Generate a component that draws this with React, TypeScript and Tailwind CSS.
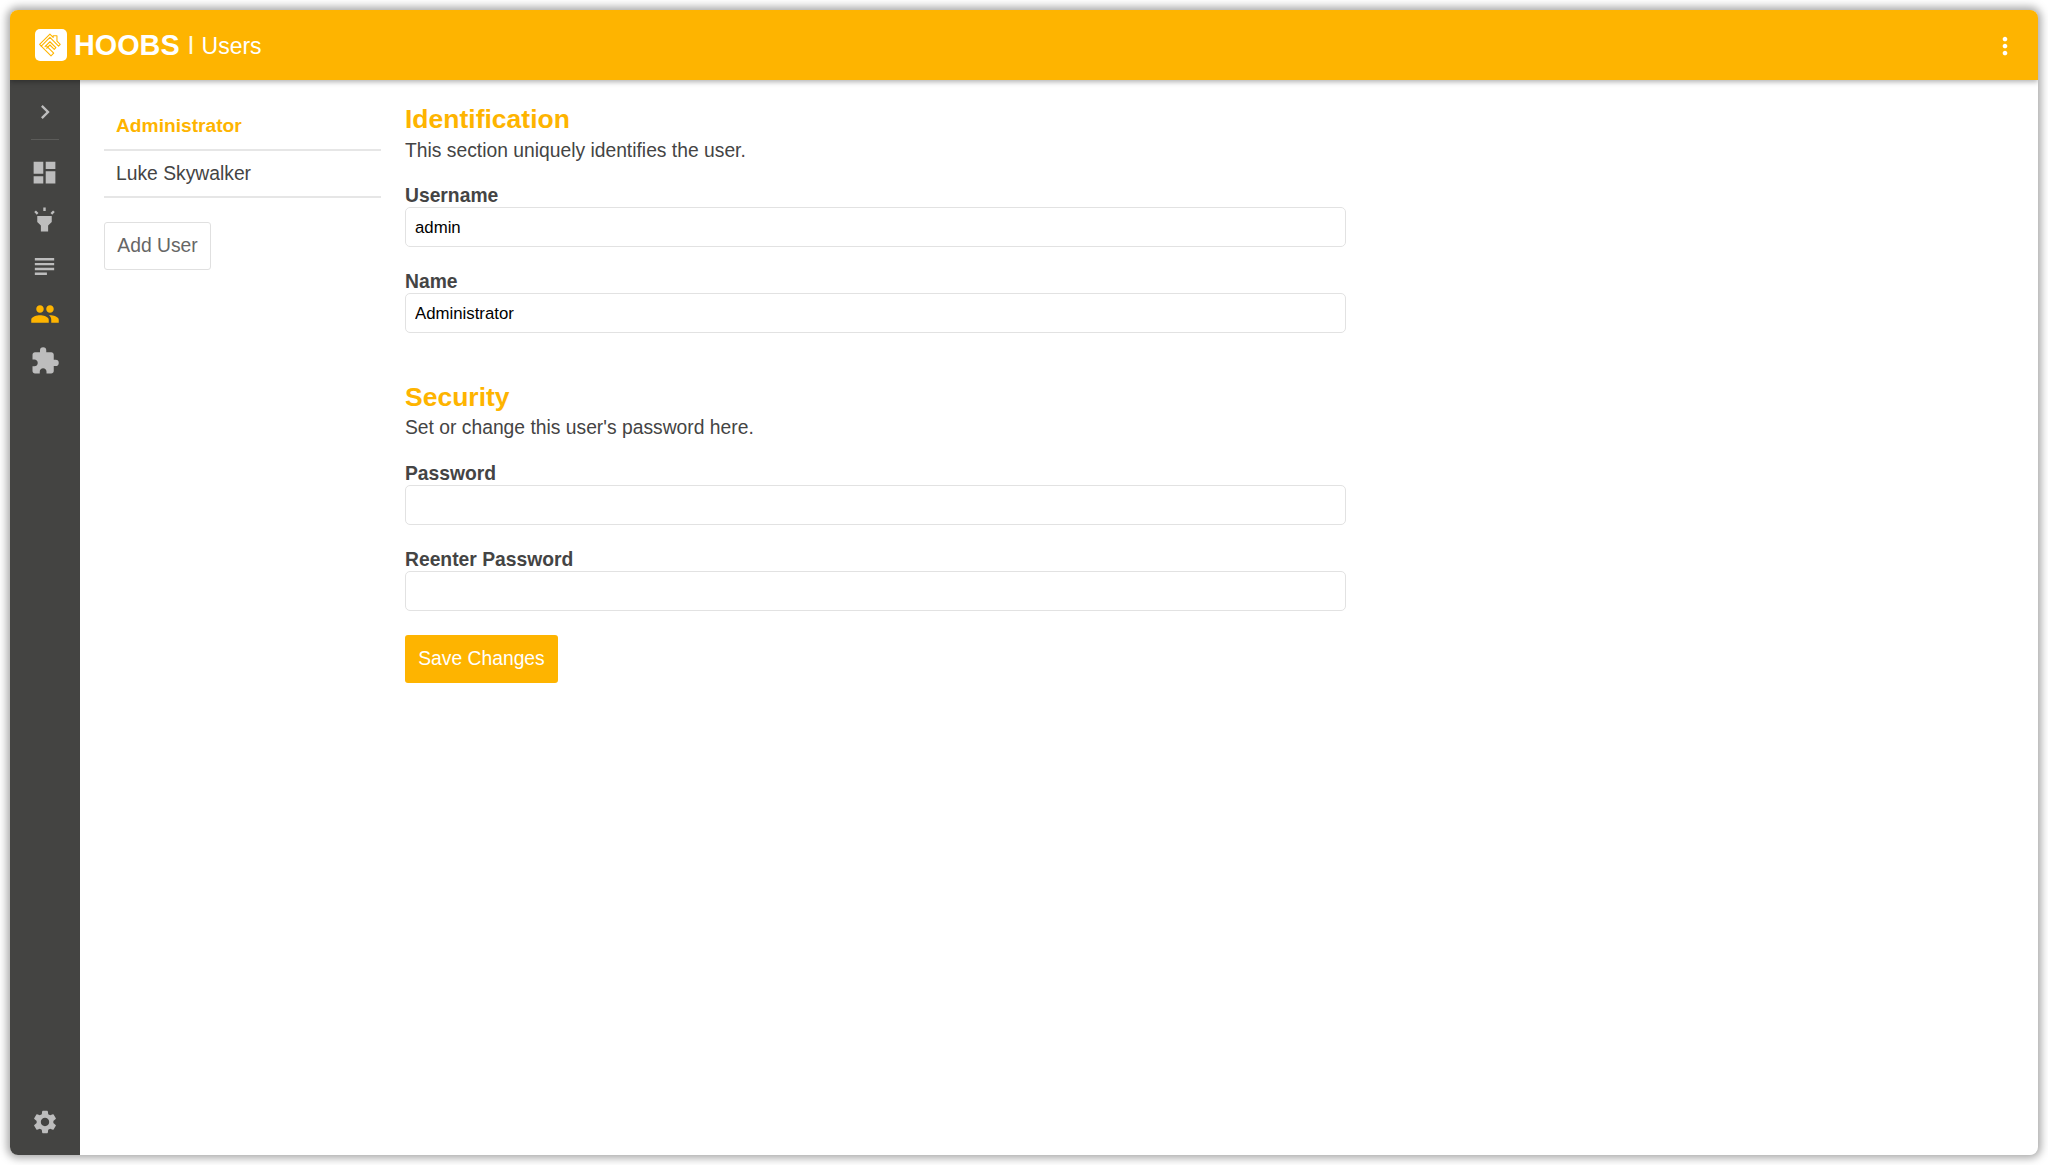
import { MdChevronRight, MdDashboard, MdExtension, MdHighlight, MdMoreVert, MdPeople, MdSettings, MdSubject } from 'react-icons/md'

function Logo() {
  return (
    <div className="flex h-8 w-8 items-center justify-center rounded-[5px] bg-white">
      <svg viewBox="0 0 24 24" className="h-[26px] w-[26px]" fill="none" stroke="#feb400" strokeWidth="1" strokeLinecap="round" strokeLinejoin="round">
        <path d="M1.5 11.5 11 2l3 3V3.5h3.5V8.5l3 3-1.5 1.5L11 5 3 13Z" />
        <path d="M6.5 13.5 11 9l5.5 5.5-1.5 1.5-4-4-3 3" />
        <path d="M3 13l9 9 2.5-2.5-7-7" />
      </svg>
    </div>
  )
}

function Field({ label, value, className }: { label: string; value?: string; className?: string }) {
  return (
    <div className={className}>
      <label className="block pb-[2px] text-[19.3px] leading-[19px] font-bold text-[#444]">{label}</label>
      <input
        readOnly
        value={value ?? ''}
        className="block h-10 w-[941px] rounded-[5px] border border-[#e2e2e2] bg-white px-[9px] pt-[2px] text-[16.8px] text-black outline-none"
      />
    </div>
  )
}

function NavIcon({ children, active }: { children: React.ReactNode; active?: boolean }) {
  return (
    <div className={`flex h-[47px] w-full items-center justify-center pr-[1px] ${active ? 'text-[#feb400]' : 'text-[#bdbdbd]'}`}>
      {children}
    </div>
  )
}

export default function App() {
  return (
    <div className="h-[1165px] w-[2048px] overflow-hidden bg-white pt-[10px] pl-[10px] font-['Liberation_Sans',Arial,sans-serif]">
      <div className="flex h-[1145px] w-[2028px] flex-col overflow-hidden rounded-[8px] bg-white shadow-[0_0_8px_3px_rgba(0,0,0,0.35)]">
        <header className="relative z-10 flex h-[70px] shrink-0 items-center justify-between bg-[#feb400] pr-[19px] pl-[25px] text-white shadow-[0_2px_5px_rgba(0,0,0,0.3)]">
          <div className="flex items-center">
            <Logo />
            <span className="mt-[2px] ml-[7px] text-[28.8px] font-bold">HOOBS</span>
            <span className="mt-[2px] ml-[8px] text-[25px] font-light text-white/90">I</span>
            <span className="mt-[2px] ml-[7px] text-[23px]">Users</span>
          </div>
          <MdMoreVert className="mt-[2px] h-[28px] w-[28px]" />
        </header>
        <div className="flex min-h-0 flex-1">
          <aside className="flex w-[70px] shrink-0 flex-col items-center bg-[#444442] text-[#bdbdbd]">
            <div className="flex h-[59px] w-full shrink-0 items-center justify-center pt-[5px] pr-[1px]">
              <MdChevronRight className="h-[28px] w-[28px]" />
            </div>
            <div className="h-px w-[28px] bg-[#5c5c5a]" />
            <div className="mt-[9px] flex w-full flex-col">
              <NavIcon><MdDashboard className="h-[29px] w-[29px]" /></NavIcon>
              <NavIcon><MdHighlight className="h-[29px] w-[29px]" /></NavIcon>
              <NavIcon><MdSubject className="h-[29px] w-[29px]" /></NavIcon>
              <NavIcon active><MdPeople className="h-[30px] w-[30px]" /></NavIcon>
              <NavIcon><MdExtension className="h-[30px] w-[30px]" /></NavIcon>
            </div>
            <div className="mt-auto mb-[19px] pr-[1px]">
              <MdSettings className="h-[28px] w-[28px]" />
            </div>
          </aside>
          <main className="flex flex-1 pl-[24px]">
            <div className="w-[277px] shrink-0 pt-[24px]">
              <div className="flex h-[47px] items-center border-b-2 border-[#e6e6e6] pb-[1px] pl-[12px] text-[19.2px] font-bold text-[#feb400]">
                Administrator
              </div>
              <div className="flex h-[47px] items-center border-b-2 border-[#e6e6e6] pt-[1px] pl-[12px] text-[19.3px] text-[#444]">
                Luke Skywalker
              </div>
              <button type="button" className="mt-[24px] h-[48px] w-[107px] rounded-[3px] border border-[#e0e0e0] bg-white text-[19.3px] text-[#666]">
                Add User
              </button>
            </div>
            <div className="ml-[24px] pt-[24px]">
              <h2 className="text-[26.5px] leading-[30px] font-bold text-[#feb400]">Identification</h2>
              <p className="mt-[2px] text-[19.3px] leading-[30px] text-[#444]">This section uniquely identifies the user.</p>
              <Field className="mt-[20px]" label="Username" value="admin" />
              <Field className="mt-[25px]" label="Name" value="Administrator" />
              <h2 className="mt-[49px] text-[26.5px] leading-[30px] font-bold text-[#feb400]">Security</h2>
              <p className="mt-[1px] text-[19.3px] leading-[30px] text-[#444]">Set or change this user's password here.</p>
              <Field className="mt-[21px]" label="Password" />
              <Field className="mt-[25px]" label="Reenter Password" />
              <button type="button" className="mt-[24px] h-[48px] w-[153px] rounded-[3px] bg-[#feb400] text-[19.3px] text-white">
                Save Changes
              </button>
            </div>
          </main>
        </div>
      </div>
    </div>
  )
}
